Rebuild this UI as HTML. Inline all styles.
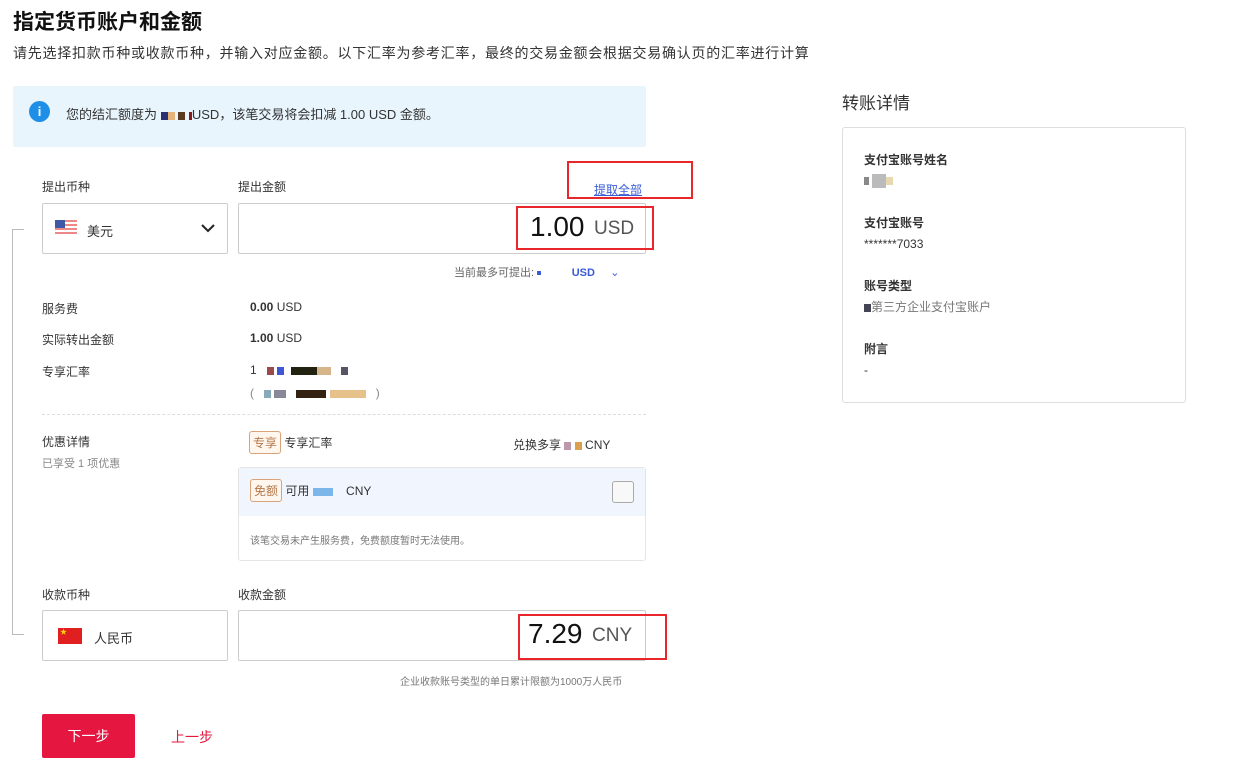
<!DOCTYPE html>
<html><head><meta charset="utf-8"><style>
*{box-sizing:border-box;margin:0;padding:0}
body{width:1250px;height:764px;background:#fff;font-family:"Liberation Sans","Noto Sans CJK SC",sans-serif;color:#333;position:relative;overflow:hidden;font-size:12px}
.a{position:absolute;white-space:nowrap}
.box{position:absolute;border:1px solid #ccc;border-radius:2px;background:#fff}
.red{position:absolute;border:2px solid #e8262b}
.px{display:inline-block;width:7px;height:8px;vertical-align:middle}
.tag{display:inline-block;border:1px solid #d9a27a;background:#fff6ee;color:#b5784a;border-radius:3px;padding:2px 3px;font-size:12px}
</style></head><body>
<div class="a" style="left:13px;top:6px;font-size:21px;font-weight:bold;color:#111">指定货币账户和金额</div>
<div class="a" style="left:13px;top:43px;font-size:14px;letter-spacing:0.75px;color:#333">请先选择扣款币种或收款币种，并输入对应金额。以下汇率为参考汇率，最终的交易金额会根据交易确认页的汇率进行计算</div>
<div class="a" style="left:13px;top:86px;width:633px;height:61px;background:#e8f5fd;border-radius:2px"></div>
<div class="a" style="left:29px;top:101px;width:21px;height:21px;border-radius:50%;background:#1f8ee6;color:#fff;font-weight:bold;text-align:center;line-height:21px;font-size:13px">i</div>
<div class="a" style="left:66px;top:104px;font-size:13px">您的结汇额度为 <span class="px" style="background:#2b3070"></span><span class="px" style="background:#e6b47a"></span> <span class="px" style="background:#5a3a20"></span> <span class="px" style="background:#8a1a1a;width:3px"></span>USD，该笔交易将会扣减 1.00 USD 金额。</div>
<div class="a" style="left:42px;top:178px">提出币种</div>
<div class="a" style="left:238px;top:178px">提出金额</div>
<div class="a" style="left:594px;top:181px;color:#3a5bd9;text-decoration:underline">提取全部</div>
<div class="red" style="left:567px;top:161px;width:126px;height:38px"></div>
<div class="a" style="left:12px;top:229px;width:1px;height:406px;background:#bbb"></div>
<div class="a" style="left:12px;top:229px;width:12px;height:1px;background:#bbb"></div>
<div class="a" style="left:12px;top:634px;width:12px;height:1px;background:#bbb"></div>
<div class="box" style="left:42px;top:203px;width:186px;height:51px"></div>
<div class="a" style="left:55px;top:220px;width:22px;height:15px;background:repeating-linear-gradient(#e88 0 2px,#fff 2px 4px)"><div style="width:10px;height:8px;background:#3c5aa8"></div></div>
<div class="a" style="left:87px;top:221px;font-size:13px">美元</div>
<svg class="a" style="left:201px;top:223px" width="14" height="10"><path d="M1 2l6 6 6-6" stroke="#222" stroke-width="2" fill="none"/></svg>
<div class="box" style="left:238px;top:203px;width:408px;height:51px"></div>
<div class="a" style="left:530px;top:211px;font-size:28px;color:#111">1.00</div>
<div class="a" style="left:594px;top:218px;font-size:19px;color:#555">USD</div>
<div class="red" style="left:516px;top:206px;width:138px;height:44px"></div>
<div class="a" style="left:454px;top:264px;font-size:11px;color:#666">当前最多可提出: <span class="px" style="background:#3a5bd9;width:4px;height:4px"></span>&nbsp;&nbsp;&nbsp;&nbsp;&nbsp;&nbsp;&nbsp;&nbsp;&nbsp; <b style="color:#3a5bd9">USD</b> &nbsp;&nbsp;&nbsp; <span style="color:#3a5bd9">⌄</span></div>
<div class="a" style="left:42px;top:300px">服务费</div>
<div class="a" style="left:250px;top:300px"><b>0.00</b> USD</div>
<div class="a" style="left:42px;top:331px">实际转出金额</div>
<div class="a" style="left:250px;top:331px"><b>1.00</b> USD</div>
<div class="a" style="left:42px;top:363px">专享汇率</div>
<div class="a" style="left:250px;top:363px">1 &nbsp;&nbsp;<span class="px" style="background:#9a4a4a"></span> <span class="px" style="background:#3f55d4"></span> &nbsp;<span class="px" style="background:#221;width:26px"></span><span class="px" style="background:#d6b58a;width:14px"></span> &nbsp;&nbsp;<span class="px" style="background:#556"></span></div>
<div class="a" style="left:250px;top:386px;color:#888">(&nbsp;&nbsp;&nbsp;<span class="px" style="background:#8ab"></span> <span class="px" style="background:#889;width:12px"></span>&nbsp;&nbsp; <span class="px" style="background:#321;width:30px"></span> <span class="px" style="background:#e6c28a;width:36px"></span> &nbsp;&nbsp;)</div>
<div class="a" style="left:42px;top:414px;width:604px;border-top:1px dashed #ddd"></div>
<div class="a" style="left:42px;top:433px">优惠详情</div>
<div class="a" style="left:42px;top:455px;font-size:11px;color:#888">已享受 1 项优惠</div>
<div class="a" style="left:249px;top:431px"><span class="tag">专享</span> 专享汇率</div>
<div class="a" style="left:513px;top:436px">兑换多享 <span class="px" style="background:#b9a;"></span> <span class="px" style="background:#d9a050"></span> CNY</div>
<div class="a" style="left:238px;top:467px;width:408px;height:94px;border:1px solid #e5e5e5;border-radius:3px"></div>
<div class="a" style="left:239px;top:468px;width:406px;height:48px;background:#f1f6fe"></div>
<div class="a" style="left:250px;top:479px"><span class="tag">免额</span> 可用 <span class="px" style="background:#7ab6ea;width:20px"></span>&nbsp;&nbsp;&nbsp; CNY</div>
<div class="a" style="left:612px;top:481px;width:22px;height:22px;border:1px solid #aaa;border-radius:3px;background:#f8f8f8"></div>
<div class="a" style="left:250px;top:532px;font-size:10px;color:#777">该笔交易未产生服务费，免费额度暂时无法使用。</div>
<div class="a" style="left:42px;top:586px">收款币种</div>
<div class="a" style="left:238px;top:586px">收款金额</div>
<div class="box" style="left:42px;top:610px;width:186px;height:51px"></div>
<div class="a" style="left:58px;top:628px;width:24px;height:16px;background:#e02020;color:#ffd700;font-size:7px;line-height:9px;padding-left:2px">★</div>
<div class="a" style="left:94px;top:628px;font-size:13px">人民币</div>
<div class="box" style="left:238px;top:610px;width:408px;height:51px"></div>
<div class="a" style="left:528px;top:618px;font-size:28px;color:#111">7.29</div>
<div class="a" style="left:592px;top:625px;font-size:19px;color:#555">CNY</div>
<div class="red" style="left:518px;top:614px;width:149px;height:46px"></div>
<div class="a" style="left:400px;top:673px;font-size:10px;color:#777">企业收款账号类型的单日累计限额为1000万人民币</div>
<div class="a" style="left:42px;top:714px;width:93px;height:44px;background:#e5163f;border-radius:2px;color:#fff;font-size:14px;text-align:center;line-height:44px">下一步</div>
<div class="a" style="left:171px;top:727px;font-size:14px;color:#e5163f">上一步</div>
<div class="a" style="left:842px;top:89px;font-size:17px;color:#333">转账详情</div>
<div class="a" style="left:842px;top:127px;width:344px;height:276px;border:1px solid #ddd;border-radius:3px"></div>
<div class="a" style="left:864px;top:151px;font-weight:bold">支付宝账号姓名</div>
<div class="a" style="left:864px;top:173px"><span class="px" style="background:#888;width:5px"></span> <span class="px" style="background:#bbb;width:14px;height:14px"></span><span class="px" style="background:#e8d8b0"></span></div>
<div class="a" style="left:864px;top:214px;font-weight:bold">支付宝账号</div>
<div class="a" style="left:864px;top:237px">*******7033</div>
<div class="a" style="left:864px;top:277px;font-weight:bold">账号类型</div>
<div class="a" style="left:864px;top:298px;color:#777"><span class="px" style="background:#445"></span>第三方企业支付宝账户</div>
<div class="a" style="left:864px;top:340px;font-weight:bold">附言</div>
<div class="a" style="left:864px;top:363px">-</div>
</body></html>
